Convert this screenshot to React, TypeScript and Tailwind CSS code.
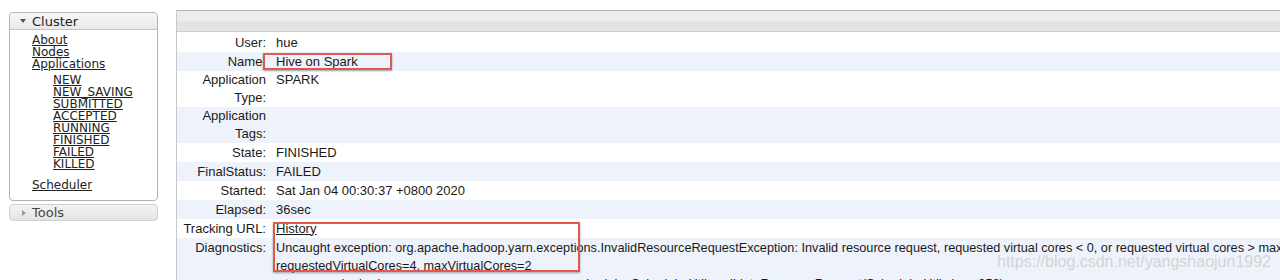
import React from 'react';

type Row = { label: string[]; value: React.ReactNode; multi?: boolean };

const sansStack = '"Liberation Sans", Arial, sans-serif';
const verdanaStack = '"DejaVu Sans", Verdana, sans-serif';

const appStates = ['NEW', 'NEW_SAVING', 'SUBMITTED', 'ACCEPTED', 'RUNNING', 'FINISHED', 'FAILED', 'KILLED'];

function Sidebar() {
  return (
    <div className="w-[149px] shrink-0 ml-[9px] pt-[12px]" style={{ fontFamily: verdanaStack }}>
      <div className="border border-[#b3b3b3] rounded-[4px] bg-white">
        <div className="h-[17px] flex items-center gap-[6px] pl-[9px] border-b border-[#c4c4c4] rounded-t-[4px] bg-gradient-to-b from-[#f7f7f7] to-[#e9e9e9] text-[13px] text-[#222]">
          <svg width="6" height="4" viewBox="0 0 6 4" className="ml-[1px]">
            <path d="M0 0 L6 0 L3 4 Z" fill="#555" />
          </svg>
          <span className="leading-[17px]">Cluster</span>
        </div>
        <div className="pt-[4px] pb-[9px] pl-[22px] text-[12px] leading-[12px] text-[#222]">
          <div className="flex flex-col">
            <a className="underline">About</a>
            <a className="underline">Nodes</a>
            <a className="underline">Applications</a>
          </div>
          <div className="flex flex-col pl-[21px] mt-[4px]">
            {appStates.map((s) => (
              <a key={s} className="underline">
                {s}
              </a>
            ))}
          </div>
          <div className="mt-[9px]">
            <a className="underline">Scheduler</a>
          </div>
        </div>
      </div>
      <div className="mt-[3px] h-[17px] flex items-center gap-[6px] pl-[12px] border border-[#cfcfcf] rounded-[4px] bg-gradient-to-b from-[#f3f3f3] to-[#e4e4e4] text-[13px] text-[#444]">
        <svg width="4" height="6" viewBox="0 0 4 6">
          <path d="M0 0 L4 3 L0 6 Z" fill="#999" />
        </svg>
        <span className="leading-[17px]">Tools</span>
      </div>
    </div>
  );
}

const rows: Row[] = [
  { label: ['User:'], value: 'hue' },
  { label: ['Name:'], value: 'Hive on Spark' },
  { label: ['Application', 'Type:'], value: 'SPARK', multi: true },
  { label: ['Application', 'Tags:'], value: '', multi: true },
  { label: ['State:'], value: 'FINISHED' },
  { label: ['FinalStatus:'], value: 'FAILED' },
  { label: ['Started:'], value: 'Sat Jan 04 00:30:37 +0800 2020' },
  { label: ['Elapsed:'], value: '36sec' },
  { label: ['Tracking URL:'], value: <a className="underline">History</a> },
  {
    label: ['Diagnostics:'],
    value: (
      <div className="text-[12.7px]">
        <div className="whitespace-nowrap">
          Uncaught exception: org.apache.hadoop.yarn.exceptions.InvalidResourceRequestException: Invalid resource request,
          requested virtual cores &lt; 0, or requested virtual cores &gt; max configured,
        </div>
        <div className="whitespace-nowrap">requestedVirtualCores=4, maxVirtualCores=2</div>
        <div className="whitespace-nowrap pl-[2px]">
          at org.apache.hadoop.yarn.server.resourcemanager.scheduler.SchedulerUtils.validateResourceRequest(SchedulerUtils.java:258)
        </div>
      </div>
    ),
  },
];

function InfoTable() {
  return (
    <div className="flex-1 min-w-0 ml-[18px] mt-[10px] border-l border-[#c8c8c8]" style={{ fontFamily: sansStack }}>
      <div className="h-[22px] border-t border-[#b5b5b5] border-b border-b-[#cdcdcd] bg-gradient-to-b from-[#ededed] from-50% to-[#e3e3e3] to-50%" />
      <div className="mt-px text-[13px] text-[#1a1a1a]">
        {rows.map((r, i) => (
          <div
            key={i}
            className={`grid grid-cols-[99px_1fr] leading-[18px] ${r.multi ? '' : 'py-[0.5px]'} ${
              i % 2 === 1 ? 'bg-[#eef2fb]' : 'bg-white'
            }`}
          >
            <div className="text-right pr-[10px] flex flex-col">
              {r.label.map((l) => (
                <span key={l}>{l}</span>
              ))}
            </div>
            <div className="whitespace-nowrap">{r.value}</div>
          </div>
        ))}
      </div>
    </div>
  );
}

export default function App() {
  return (
    <div className="relative w-[1280px] h-[280px] overflow-hidden bg-white">
      <div className="flex">
        <Sidebar />
        <InfoTable />
      </div>

      {/* annotation boxes */}
      <div className="absolute left-[263px] top-[53px] w-[129px] h-[17px] border-2 border-[#e2584c] shadow-[0_1px_2px_rgba(0,0,0,0.35)]" />
      <div className="absolute left-[273px] top-[222px] w-[307px] h-[50px] border-2 border-[#e2584c] shadow-[0_1px_2px_rgba(0,0,0,0.35)]" />

      {/* watermark */}
      <div
        className="absolute left-[997px] top-[252px] text-[16px] leading-[20px] text-[#d4d4d4] whitespace-nowrap"
        style={{ fontFamily: sansStack }}
      >
        https://blog.csdn.net/yangshaojun1992
      </div>
    </div>
  );
}
